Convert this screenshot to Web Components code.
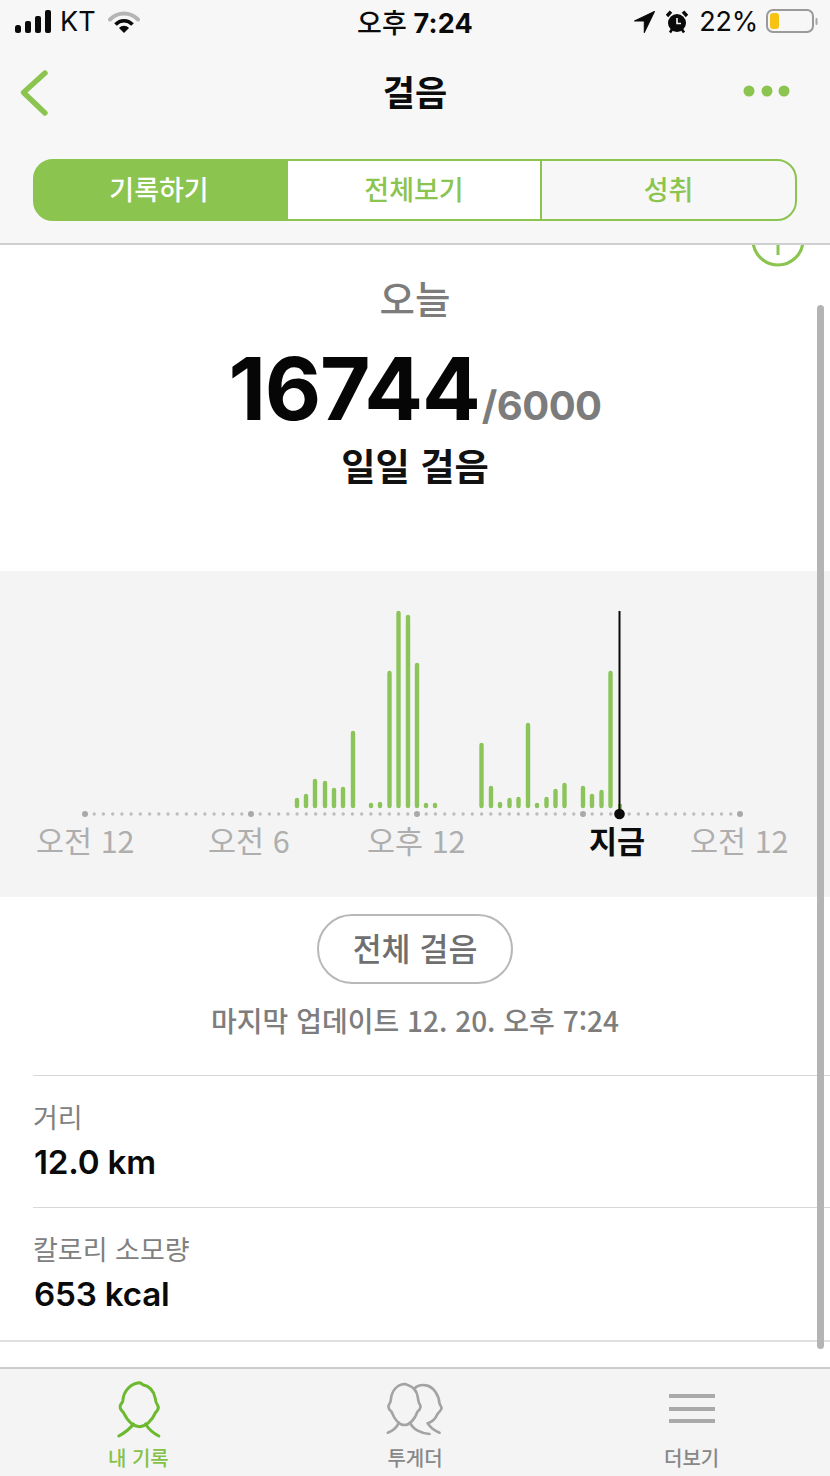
<!DOCTYPE html>
<html lang="ko">
<head>
<meta charset="utf-8">
<title>걸음</title>
<style>
html,body{margin:0;padding:0;background:#fff}
body{font-family:"Inter","Noto Sans CJK KR",sans-serif}
</style>
</head>
<body>
<app-screen>
  <status-bar></status-bar>
  <nav-bar title="걸음"></nav-bar>
  <seg-control></seg-control>
  <step-summary slot="content" label="오늘" value="16744" goal="/6000" caption="일일 걸음"></step-summary>
  <step-chart slot="content"></step-chart>
  <update-info slot="content" action="전체 걸음" text="마지막 업데이트 12. 20. 오후 7:24"></update-info>
  <stat-row slot="content" label="거리" value="12.0 km"></stat-row>
  <stat-row slot="content" label="칼로리 소모량" value="653 kcal"></stat-row>
  <full-rule slot="content"></full-rule>
  <tab-bar slot="tabs"></tab-bar>
</app-screen>
<script>
const FONT='"Inter","Noto Sans CJK KR",sans-serif';
const KR='"Noto Sans CJK KR",sans-serif';
const GREEN='#8bc44f';
function def(name,render){
  customElements.define(name,class extends HTMLElement{
    connectedCallback(){
      if(this.shadowRoot)return;
      const r=this.attachShadow({mode:'open'});
      r.innerHTML=render(this);
    }
  });
}
def('app-screen',()=>`<style>
:host{display:flex;flex-direction:column;width:830px;height:1476px;overflow:hidden;position:relative;background:#fff;font-family:${FONT}}
header{display:block;background:#f7f7f7;height:243px;border-bottom:2px solid #cfcfcf;flex:none;position:relative;z-index:2}
main{flex:1;min-height:0;position:relative;overflow:hidden;background:#fff}
.info{position:absolute;left:750px;top:-7px;width:56px;height:32px}
.scroll{position:absolute;right:6px;top:60px;width:7px;height:1044px;border-radius:4px;background:#b4b4b4;z-index:3}
footer{flex:none}
</style>
<header><slot></slot></header>
<main>
  <svg class="info" viewBox="0 0 56 32"><circle cx="28" cy="2" r="25" fill="none" stroke="${GREEN}" stroke-width="3.2"/><path d="M28 0V17" stroke="${GREEN}" stroke-width="3" fill="none"/></svg>
  <slot name="content"></slot>
  <div class="scroll"></div>
</main>
<footer><slot name="tabs"></slot></footer>`);

def('status-bar',()=>`<style>
:host{display:flex;align-items:center;height:46px;box-sizing:border-box;padding-bottom:4px;position:relative;color:#0a0a0a;font-size:27px;font-family:${FONT}}
.l,.r{display:flex;align-items:center;position:absolute;top:0;height:43px}
.l{left:14px}.r{right:12px}
.c{margin:0 auto;font-weight:700;font-size:27px;letter-spacing:.2px;position:relative;left:0}
.c span{font-family:${KR};font-weight:500}
svg{display:block}
</style>
<div class="l">
<svg width="38" height="24" viewBox="0 0 38 24"><rect x="1" y="15" width="6" height="8" rx="2.5" fill="#0a0a0a"/><rect x="11" y="11" width="6" height="12" rx="2" fill="#0a0a0a"/><rect x="21" y="6" width="6" height="17" rx="2" fill="#0a0a0a"/><rect x="31" y="0" width="6" height="23" rx="2" fill="#0a0a0a"/></svg>
<span style="margin-left:8px;font-weight:400">KT</span>
<svg style="margin-left:12px" width="32" height="24" viewBox="0 0 32 24"><path d="M2 9.5C10 1.5 22 1.5 30 9.5" fill="none" stroke="#b5b5b5" stroke-width="4" stroke-linecap="round"/><path d="M7.5 14.5C12.5 9.5 19.5 9.5 24.5 14.5" fill="none" stroke="#0a0a0a" stroke-width="3.6"/><path d="M11 18C14 15 18 15 21 18L16 23Z" fill="#0a0a0a"/></svg>
</div>
<div class="c"><span>오후</span> 7:24</div>
<div class="r">
<svg width="21" height="22" viewBox="0 0 20 21"><path d="M19.5 0.5L0.5 9.5H9.8V20.5Z" fill="#0a0a0a" stroke="#0a0a0a" stroke-width="1" stroke-linejoin="round"/></svg>
<svg style="margin-left:11px" width="22" height="24" viewBox="0 0 22 24"><circle cx="11" cy="13" r="9" fill="#0a0a0a"/><path d="M1 6L5 1.6M21 6L17 1.6" stroke="#0a0a0a" stroke-width="3.4"/><path d="M4 22.500L6 19.500M18 22.500L16 19.500" stroke="#0a0a0a" stroke-width="2.600"/><path d="M11 8V13.500H15" fill="none" stroke="#f7f7f7" stroke-width="1.600"/></svg>
<span style="margin-left:11px;font-weight:400;letter-spacing:-.2px">22%</span>
<svg style="margin-left:8px" width="52" height="25" viewBox="0 0 52 25"><rect x="1" y="1" width="46" height="22" rx="6" fill="none" stroke="#9a9a9a" stroke-width="2"/><rect x="4" y="4" width="9" height="16" rx="3" fill="#f7c313"/><rect x="49.500" y="9" width="2" height="7" rx="1" fill="#a5a5a5"/></svg>
</div>`);

def('nav-bar',h=>`<style>
:host{display:flex;align-items:center;justify-content:center;height:90px;box-sizing:border-box;padding-bottom:2px;position:relative}
h1{margin:0;font:700 35px/1 ${KR};color:#0c0c0c}
.back{position:absolute;left:18px;top:23px}
.more{position:absolute;left:742px;top:38px}
</style>
<svg class="back" width="32" height="48" viewBox="0 0 32 48"><path d="M27 4L5.500 23.500L27 44" fill="none" stroke="${GREEN}" stroke-width="5.400" stroke-linecap="round" stroke-linejoin="round"/></svg>
<h1>${h.getAttribute('title')}</h1>
<svg class="more" width="50" height="14" viewBox="0 0 50 14"><circle cx="7" cy="7" r="5.500" fill="${GREEN}"/><circle cx="25" cy="7" r="5.500" fill="${GREEN}"/><circle cx="42" cy="7" r="5.500" fill="${GREEN}"/></svg>`);

def('seg-control',()=>`<style>
:host{display:grid;grid-template-columns:253px 254px 1fr;width:764px;height:62px;margin:23px 0 0 33px;box-sizing:border-box;border:2px solid ${GREEN};border-radius:20px;overflow:hidden;font:500 27px/1 ${KR};color:${GREEN};background:linear-gradient(90deg,${GREEN} 40px,transparent 40px)}
div{display:flex;align-items:center;justify-content:center;padding-bottom:4px}
.on{background:${GREEN};color:#fff;padding-right:5px}
.mid{background:#fff;border-right:2px solid ${GREEN}}
</style>
<div class="on">기록하기</div><div class="mid">전체보기</div><div>성취</div>`);

def('step-summary',h=>`<style>
:host{display:flex;flex-direction:column;align-items:center;height:326px;box-sizing:border-box;padding-top:27px;font-family:${KR}}
.lab{font:500 38.500px/50px ${KR};color:#7c7c7c}
.val{display:flex;align-items:baseline;height:92px;margin-top:21px}
.num{font:700 87px/92px ${FONT};color:#060606;letter-spacing:-1.200px}
.goal{font:700 40px/92px ${FONT};color:#7c7c7c;letter-spacing:-.5px;margin-left:2px}
.cap{font:700 37.300px/50px ${KR};color:#111;margin-top:5px}
</style>
<div class="lab">${h.getAttribute('label')}</div>
<div class="val"><span class="num">${h.getAttribute('value')}</span><span class="goal">${h.getAttribute('goal')}</span></div>
<div class="cap">${h.getAttribute('caption')}</div>`);

const BARS=[[297,798],[306,794],[315,779],[325,781],[334,788],[343,787],[353,731],[371,803],[380,802],[389.500,671],[398.500,611],[408,615],[417,663],[426,803],[435,803],[481.500,743],[491,786],[500,802],[509.500,798],[518.500,797],[528,723],[537,803],[546.500,797],[555.500,789],[564.500,783],[583,786],[592,794],[601.500,790],[610.500,671]];
def('step-chart',()=>{
  const top=571;
  let dots='';
  const seg=[[85,251,18],[251,417,18],[417,583,18],[583,740,17]];
  seg.forEach(([a,b,n])=>{for(let i=1;i<n;i++){dots+=`<circle cx="${(a+(b-a)*i/n).toFixed(1)}" cy="${814-top}" r="1.700" fill="#bdbdbd"/>`}});
  [85,251,417,583,740].forEach(x=>{dots+=`<circle cx="${x}" cy="${814-top}" r="3" fill="#a9a9a9"/>`});
  const bars=BARS.map(([x,y])=>`<path d="M${x} ${y-top+2}V${806-top}" stroke="#8bc45a" stroke-width="4.400" stroke-linecap="round"/>`).join('');
  return `<style>
:host{display:block;height:326px;background:#f4f4f4;position:relative}
svg{display:block;position:absolute;left:0;top:0}
.labels{position:absolute;left:0;right:0;top:248px;display:flex;font:400 30.500px/42px ${KR};color:#aeaeae;white-space:nowrap}
.labels span{display:block}
.labels b{font-weight:700;color:#0c0c0c;font-size:30.500px}
</style>
<svg width="830" height="326" viewBox="0 0 830 326">${dots}${bars}
<path d="M620 ${804-top}V${810-top}" stroke="#8bc45a" stroke-width="4"/>
<path d="M619.500 ${611-top}V${814-top}" stroke="#0a0a0a" stroke-width="2"/>
<circle cx="619.500" cy="${814-top}" r="5.300" fill="#0a0a0a"/></svg>
<div class="labels"><span style="margin-left:36px;width:96px">오전 12</span><span style="margin-left:76px;width:84px">오전 6</span><span style="margin-left:75px;width:97px">오후 12</span><span style="margin-left:125px;width:54px"><b>지금</b></span><span style="margin-left:47px;width:96px">오전 12</span></div>`;
});

def('update-info',h=>`<style>
:host{display:flex;flex-direction:column;align-items:center;height:178px;box-sizing:border-box;padding-top:17px}
button{all:unset;box-sizing:border-box;width:196px;height:70px;border:2px solid #b8b8b8;border-radius:35px;display:flex;align-items:center;justify-content:center;padding-bottom:2px;font:500 31.500px/1 ${KR};color:#6f6f6f;background:#fff}
p{margin:17px 0 0;font:500 28px/38px ${KR};color:#7d7d7d;white-space:nowrap}
</style>
<button>${h.getAttribute('action')}</button><p>${h.getAttribute('text')}</p>`);

def('stat-row',h=>`<style>
:host{display:block;height:132px;margin-left:33px;border-top:1px solid #d8d8d8;box-sizing:border-box;padding-top:21px}
.l{font:400 27px/40px ${KR};color:#808080}
.v{font:600 33.200px/44px ${FONT};color:#0a0a0a;margin:3px 0 0 1px;letter-spacing:-.2px}
</style>
<div class="l">${h.getAttribute('label')}</div><div class="v">${h.getAttribute('value')}</div>`);

def('full-rule',()=>`<style>:host{display:block;height:2px;margin-top:1px;background:#e0e0e0}</style>`);

const HEAD='M240 38C214 40 192 62 190 92C189 98 186 100 183 105C178 114 186 122 192 128C204 152 222 170 240 170C258 170 278 152 288 128C294 122 300 114 294 105C290 100 288 96 287 84C283 62 268 48 250 44C246 42 244 38 240 38Z';
const FRONT='M135 42C112 44 96 62 94 90C94 96 91 100 88 105C84 114 90 120 96 125C105 148 120 165 135 165C150 165 166 148 174 125C180 120 186 112 181 103C177 98 176 90 175 82C172 62 158 50 146 46C142 44 140 42 135 42Z';
def('tab-bar',()=>`<style>
:host{display:grid;grid-template-columns:repeat(3,1fr);height:109px;box-sizing:border-box;border-top:2px solid #cbcbcb;background:#f4f4f4;font:500 20px/1 ${KR};color:#888}
div{display:flex;flex-direction:column;align-items:center;position:relative}
svg{display:block;height:58px;margin-top:12px}
span{margin-top:9px}
.on{color:#84c247}
</style>
<div class="on"><svg style="margin-left:3px" width="47" viewBox="170 33 140 174"><path d="${HEAD}" fill="none" stroke="#6cb92f" stroke-width="9"/><path d="M222 162C210 178 196 188 178 198M258 162C268 178 282 190 298 198" fill="none" stroke="#6cb92f" stroke-width="9" stroke-linecap="round"/></svg><span>내 기록</span></div>
<div><svg width="57" viewBox="80 33 170 174" fill="none" stroke="#a3a3a3" stroke-width="8" stroke-linecap="round"><path d="${FRONT}"/><path d="M118 158C112 172 100 182 85 188M152 158C160 178 185 190 210 192"/><path d="M165 55C175 45 190 44 200 46C222 50 238 75 240 100C240 104 246 108 246 114C246 122 238 126 234 132C228 146 218 156 205 160"/><path d="M205 160C212 172 226 182 240 188"/></svg><span>투게더</span></div>
<div><svg width="46" viewBox="0 0 46 58"><path d="M0 15H46M0 28H46M0 40H46" stroke="#a9a9a9" stroke-width="4.200"/></svg><span>더보기</span></div>`);
</script>
</body>
</html>
